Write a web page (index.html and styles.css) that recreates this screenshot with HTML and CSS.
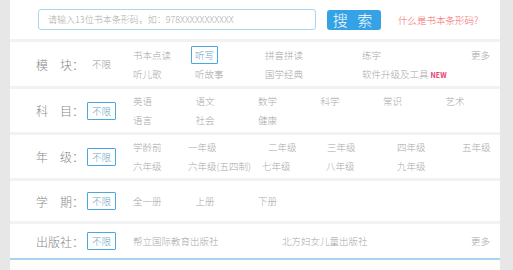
FILE: index.html
```html
<!DOCTYPE html>
<html lang="zh-CN">
<head>
    <meta charset="UTF-8">
    <title>书本条形码搜索</title>
    <link rel="stylesheet" href="styles.css">
</head>
<body>
    <div class="panel">
        <div class="search">
            <div class="search-input">请输入13位书本条形码，如：978XXXXXXXXXXX</div>
            <button class="search-btn">搜 索</button>
            <a class="what" href="#">什么是书本条形码?</a>
        </div>

        <div class="row first">
            <div class="head"><span class="label">模　块：</span><span class="any">不限</span></div>
            <div class="opts">
                <div class="line mod">
                    <span>书本点读</span><span><b class="on">听写</b></span><span>拼音拼读</span><span>练字</span><span>更多</span>
                </div>
                <div class="line mod">
                    <span>听儿歌</span><span>听故事</span><span>国学经典</span><span>软件升级及工具 <i class="new">NEW</i></span>
                </div>
            </div>
        </div>

        <div class="row">
            <div class="head"><span class="label">科　目：</span><span class="any on">不限</span></div>
            <div class="opts">
                <div class="line subj">
                    <span>英语</span><span>语文</span><span>数学</span><span>科学</span><span>常识</span><span>艺术</span>
                </div>
                <div class="line subj">
                    <span>语言</span><span>社会</span><span>健康</span>
                </div>
            </div>
        </div>

        <div class="row">
            <div class="head"><span class="label">年　级：</span><span class="any on">不限</span></div>
            <div class="opts">
                <div class="line grade1">
                    <span>学龄前</span><span>一年级</span><span>二年级</span><span>三年级</span><span>四年级</span><span>五年级</span>
                </div>
                <div class="line grade2">
                    <span>六年级</span><span>六年级(五四制)</span><span>七年级</span><span>八年级</span><span>九年级</span>
                </div>
            </div>
        </div>

        <div class="row single">
            <div class="head"><span class="label">学　期：</span><span class="any on">不限</span></div>
            <div class="opts">
                <div class="line subj">
                    <span>全一册</span><span>上册</span><span>下册</span>
                </div>
            </div>
        </div>

        <div class="row single last">
            <div class="head"><span class="label">出版社：</span><span class="any on">不限</span></div>
            <div class="opts">
                <div class="line press">
                    <span>帮立国际教育出版社</span><span>北方妇女儿童出版社</span><span>更多</span>
                </div>
            </div>
        </div>

        <div class="foot"></div>
    </div>
</body>
</html>
```

FILE: styles.css
```css
html, body {margin: 0; padding: 0;}
body {background-color: #e7e7e7; font-family: "Noto Sans CJK SC", "Noto Sans", sans-serif; font-weight: 300; color: #999; height: 270px; overflow: hidden;}
.panel {margin-left: 10px; width: 490px; background-color: #fff;}

.search {display: flex; align-items: center; height: 39px; padding-left: 28px;}
.search-input {box-sizing: border-box; width: 278px; height: 21px; border: 1px solid #a9d6ef; border-radius: 3px; padding-left: 9px; font-size: 9px; line-height: 19px; color: #aaa; white-space: nowrap;}
.search-btn {margin-left: 11px; width: 54px; height: 20px; border: none; border-radius: 3px; background-color: #35a2e6; color: #fff; font-family: inherit; font-weight: 300; font-size: 15px; line-height: 20px; padding: 0; letter-spacing: 3px;}
.what {margin-left: 17px; font-size: 9.5px; color: #f36464; text-decoration: none;}

.row {display: flex; align-items: center; height: 43px; border-top: 3px solid #f2f2f2;}
.row.first {height: 44px;}
.row.single {height: 40px;}
.row.last {height: 34px;}
.head {width: 97px; padding-left: 26px; display: flex; align-items: center; flex-shrink: 0;}
.label {font-size: 12px; color: #888; width: 50px; white-space: nowrap;}
.any {font-size: 9.5px; color: #999; margin-left: 6px; white-space: nowrap;}
.on {border: 1px solid #4ba7df; color: #6a9fc4; padding: 1px 3px; font-weight: 300; border-radius: 1px; white-space: nowrap;}
.head .any.on {margin-left: 1px; padding: 1px 4px;}

.opts {font-size: 9.5px; color: #a8a8a8;}
.line {display: grid; height: 19px; align-items: center; white-space: nowrap;}
.line.mod {grid-template-columns: 62px 70px 97px 109px auto;}
.line.mod .on {margin-left: -4px;}
.line.subj {grid-template-columns: repeat(6, 62.5px);}
.line.grade1 {grid-template-columns: 55px 80px 59px 70px 65px auto;}
.line.grade2 {grid-template-columns: 55px 74px 64px 71px auto;}
.line.press {grid-template-columns: 149px 189px auto;}
.new {font-style: normal; font-size: 7px; font-weight: bold; color: #e83a6c;}

.foot {height: 12px; border-top: 2px solid #a8d5ee; background-color: #fdfdf9;}
```
